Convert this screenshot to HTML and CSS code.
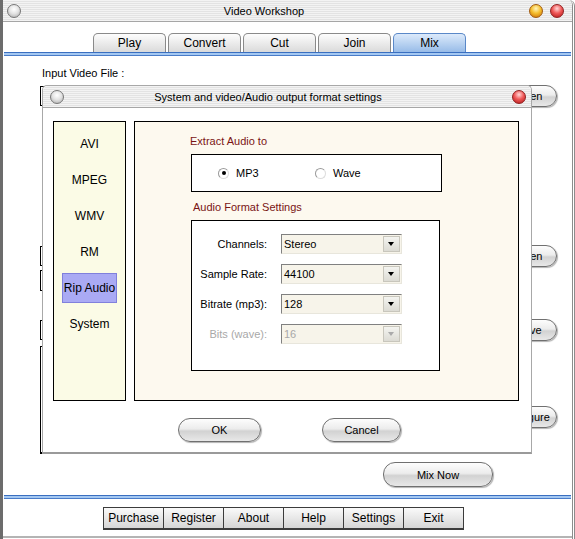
FILE: index.html
```html
<!DOCTYPE html>
<html lang="en">
<head>
    <meta charset="UTF-8">
    <title>Video Workshop</title>
    <link rel="stylesheet" href="styles.css">
</head>
<body>
    <div class="app">
        <div class="titlebar">
            <span class="orb orb-gray"></span>
            <span class="title">Video Workshop</span>
            <span class="orb orb-orange"></span>
            <span class="orb orb-red"></span>
        </div>

        <div class="tabs">
            <div class="tab">Play</div>
            <div class="tab">Convert</div>
            <div class="tab">Cut</div>
            <div class="tab">Join</div>
            <div class="tab active">Mix</div>
        </div>
        <div class="blue-line"></div>

        <div class="content">
            <div class="field-label">Input Video File :</div>
            <div class="row row-a">
                <div class="box"></div>
                <button class="pill side">Open</button>
            </div>
            <div class="row row-b">
                <div class="box"></div>
                <button class="pill side">Open</button>
            </div>
            <div class="row row-c">
                <div class="box"></div>
            </div>
            <div class="row row-d">
                <div class="box"></div>
                <button class="pill side">Save</button>
            </div>
            <div class="row row-e">
                <div class="frame"></div>
                <button class="pill side wide">Configure</button>
            </div>
        </div>

        <div class="mix-row">
            <button class="pill mix">Mix Now</button>
        </div>
        <div class="blue-line bottom"></div>

        <div class="toolbar">
            <button class="tool">Purchase</button>
            <button class="tool">Register</button>
            <button class="tool">About</button>
            <button class="tool">Help</button>
            <button class="tool">Settings</button>
            <button class="tool">Exit</button>
        </div>
        <div class="status-line"></div>

        <!-- settings dialog, floating over the main window -->
        <div class="dialog">
            <div class="titlebar dlg-titlebar">
                <span class="orb orb-gray"></span>
                <span class="title">System and video/Audio output format settings</span>
                <span class="orb orb-red"></span>
            </div>

            <div class="dlg-body">
                <div class="side-menu">
                    <div class="menu-item">AVI</div>
                    <div class="menu-item">MPEG</div>
                    <div class="menu-item">WMV</div>
                    <div class="menu-item">RM</div>
                    <div class="menu-item selected">Rip Audio</div>
                    <div class="menu-item">System</div>
                </div>

                <div class="panel">
                    <div class="heading">Extract Audio to</div>
                    <div class="radio-box">
                        <label class="radio"><span class="dot checked"></span>MP3</label>
                        <label class="radio"><span class="dot"></span>Wave</label>
                    </div>

                    <div class="heading heading-2">Audio Format Settings</div>
                    <div class="format-box">
                        <div class="lbl">Channels:</div>
                        <div class="select"><span>Stereo</span><span class="arrow"></span></div>

                        <div class="lbl">Sample Rate:</div>
                        <div class="select"><span>44100</span><span class="arrow"></span></div>

                        <div class="lbl">Bitrate (mp3):</div>
                        <div class="select"><span>128</span><span class="arrow"></span></div>

                        <div class="lbl disabled">Bits (wave):</div>
                        <div class="select disabled"><span>16</span><span class="arrow"></span></div>
                    </div>
                </div>
            </div>

            <div class="dlg-buttons">
                <button class="pill ok">OK</button>
                <button class="pill cancel">Cancel</button>
            </div>
        </div>
    </div>
</body>
</html>
```

FILE: styles.css
```css
body {
    margin: 0;
    font-family: "Liberation Sans", Arial, sans-serif;
    font-size: 11px;
    color: #000;
    background: #fff;
}

.app {
    position: relative;
    box-sizing: border-box;
    width: 575px;
    height: 539px;
    overflow: hidden;
    background: #fff;
    border-left: 3px solid #6c6c6c;
    border-right: 3px double #8c8c8c;
    border-top-right-radius: 6px;
}

/* striped title bars */
.titlebar {
    display: flex;
    align-items: center;
    box-sizing: border-box;
    height: 22px;
    padding: 0 8px 0 4px;
    background: repeating-linear-gradient(#f3f3f3 0, #f3f3f3 1px, #e3e3e3 1px, #e3e3e3 2px);
    border-bottom: 1px solid #a6a6a6;
}

.title {
    flex: 1;
    text-align: center;
    padding-right: 22px;
    font-size: 11px;
}

.orb {
    display: inline-block;
    box-sizing: border-box;
    width: 14px;
    height: 14px;
    border-radius: 50%;
    border: 1px solid #777;
}

.orb-gray { background: radial-gradient(circle at 50% 35%, #fff 0, #e4e4e4 45%, #a8a8a8 100%); }
.orb-orange { background: radial-gradient(circle at 50% 30%, #fff6c0 0, #f5c030 45%, #c86a00 100%); border-color: #a05a10; margin-right: 7px; }
.orb-red { background: radial-gradient(circle at 50% 30%, #ffd8d8 0, #f05a5a 45%, #b01414 100%); border-color: #902020; }

/* tabs */
.tabs {
    display: flex;
    gap: 2px;
    height: 19px;
    margin-top: 11px;
    padding-left: 90px;
}

.tab {
    box-sizing: border-box;
    width: 73px;
    height: 19px;
    line-height: 19px;
    text-align: center;
    font-size: 12px;
    background: linear-gradient(#fdfdfd, #dadada);
    border: 1px solid #8a8a8a;
    border-bottom: none;
    border-radius: 5px 5px 0 0;
}

.tab.active {
    background: linear-gradient(#dceafb, #98bce8);
    border-color: #5a88c8;
}

.blue-line {
    height: 4px;
    margin: 0 1px;
    background: linear-gradient(#3a6fc0 0, #3a6fc0 1px, #a4c8f2 1px, #a4c8f2 3px, #4a7cc8 3px);
}

.blue-line.bottom {
    margin-top: 8px;
}

/* main content, mostly behind the dialog */
.content {
    padding: 10px 15px 0 37px;
}

.field-label {
    height: 14px;
    line-height: 14px;
    padding-left: 2px;
}

.row {
    display: flex;
    align-items: center;
    justify-content: space-between;
}

.row-a { margin-top: 5px; height: 22px; }
.row-b { margin-top: 139px; height: 20px; }
.row-c { margin-top: 4px; height: 21px; }
.row-d { margin-top: 29px; height: 20px; }
.row-e { margin-top: 6px; height: 108px; align-items: flex-start; }

.box {
    flex: 1;
    box-sizing: border-box;
    height: 20px;
    margin-right: 6px;
    border: 1px solid #000;
}

.row-c .box { height: 21px; margin-right: 60px; }

.frame {
    box-sizing: border-box;
    width: 455px;
    height: 108px;
    border: 1px solid #000;
    border-bottom-width: 2px;
}

.pill {
    box-sizing: border-box;
    height: 22px;
    padding: 0;
    font-family: "Liberation Sans", Arial, sans-serif;
    font-size: 11px;
    color: #000;
    background: linear-gradient(#fdfdfd 0, #ececec 45%, #d2d2d2 55%, #e8e8e8 100%);
    border: 1px solid #707070;
    border-radius: 11px;
    box-shadow: 1px 1px 1px rgba(0, 0, 0, 0.3);
}

.side { width: 56px; }
.side.wide { width: 62px; margin-top: 60px; }

.mix-row {
    margin-top: 8px;
    padding-left: 380px;
    height: 25px;
}

.mix {
    width: 110px;
    height: 25px;
    border-radius: 12px;
}

/* bottom toolbar */
.toolbar {
    display: flex;
    margin-top: 8px;
    padding-left: 101px;
}

.tool {
    box-sizing: border-box;
    width: 61px;
    height: 23px;
    margin-left: -1px;
    padding: 0;
    font-family: "Liberation Sans", Arial, sans-serif;
    font-size: 12px;
    color: #000;
    background: linear-gradient(#fafafa, #d6d6d6);
    border: 1px solid #3c3c3c;
    border-bottom-width: 2px;
}

.status-line {
    height: 2px;
    margin-top: 6px;
    background: #b4b4b4;
}

/* dialog */
.dialog {
    position: absolute;
    left: 39px;
    top: 85px;
    box-sizing: border-box;
    width: 490px;
    height: 369px;
    background: #fff;
    border: 1px solid #a8a8a8;
    border-bottom: 2px solid #9a9a9a;
    border-radius: 5px 5px 0 0;
}

.dlg-titlebar {
    padding: 0 5px 0 7px;
    border-radius: 5px 5px 0 0;
}

.dlg-titlebar .title { padding-right: 40px; }

.dlg-body {
    display: flex;
    gap: 8px;
    margin-top: 13px;
    padding-left: 10px;
}

.side-menu {
    box-sizing: border-box;
    width: 73px;
    height: 280px;
    padding-top: 7px;
    background: #fbfbe6;
    border: 1px solid #000;
}

.menu-item {
    box-sizing: border-box;
    width: 55px;
    height: 30px;
    line-height: 30px;
    margin: 0 auto 6px;
    text-align: center;
    font-size: 12px;
}

.menu-item.selected {
    background: #aaaaf4;
    border: 1px solid #8080dc;
    line-height: 28px;
}

.panel {
    box-sizing: border-box;
    width: 385px;
    height: 280px;
    padding: 12px 0 0 55px;
    background: #fdf9ef;
    border: 1px solid #000;
}

.heading {
    height: 14px;
    line-height: 14px;
    color: #7a1414;
}

.radio-box {
    display: flex;
    align-items: center;
    box-sizing: border-box;
    width: 251px;
    height: 38px;
    margin: 6px 0 0 1px;
    padding-left: 26px;
    background: #fff;
    border: 1px solid #000;
}

.radio {
    display: flex;
    align-items: center;
    gap: 7px;
    width: 97px;
}

.dot {
    position: relative;
    display: inline-block;
    box-sizing: border-box;
    width: 11px;
    height: 11px;
    border-radius: 50%;
    background: #fff;
    border: 1px solid #9a9a9a;
    border-right-color: #dcdcdc;
    border-bottom-color: #dcdcdc;
}

.dot.checked::after {
    content: "";
    position: absolute;
    left: 2.5px;
    top: 2.5px;
    width: 4px;
    height: 4px;
    border-radius: 50%;
    background: #000;
}

.heading-2 {
    margin: 8px 0 0 3px;
}

.format-box {
    display: grid;
    grid-template-columns: 75px 121px;
    grid-auto-rows: 20px;
    column-gap: 14px;
    row-gap: 10px;
    align-items: center;
    box-sizing: border-box;
    width: 249px;
    height: 151px;
    margin: 6px 0 0 1px;
    padding-top: 13px;
    background: #fff;
    border: 1px solid #000;
}

.lbl {
    text-align: right;
}

.lbl.disabled { color: #a8a8a8; }

.select {
    display: flex;
    align-items: center;
    justify-content: space-between;
    box-sizing: border-box;
    height: 20px;
    padding: 0 1px 0 2px;
    background: #f7f4ea;
    border: 1px solid #e8e6dc;
    border-top-color: #808080;
    border-left-color: #808080;
}

.select.disabled { color: #a8a8a8; }

.arrow {
    position: relative;
    box-sizing: border-box;
    width: 17px;
    height: 16px;
    background: linear-gradient(#f4f4f0, #dcdbd4);
    border: 1px solid #c8c6bc;
}

.arrow::after {
    content: "";
    position: absolute;
    left: 4px;
    top: 5px;
    border-left: 3.5px solid transparent;
    border-right: 3.5px solid transparent;
    border-top: 4px solid #000;
}

.select.disabled .arrow::after { border-top-color: #aaa; }

.dlg-buttons {
    display: flex;
    gap: 61px;
    margin-top: 17px;
    padding-left: 135px;
}

.ok { width: 83px; height: 24px; border-radius: 12px; }
.cancel { width: 79px; height: 24px; border-radius: 12px; }
```
